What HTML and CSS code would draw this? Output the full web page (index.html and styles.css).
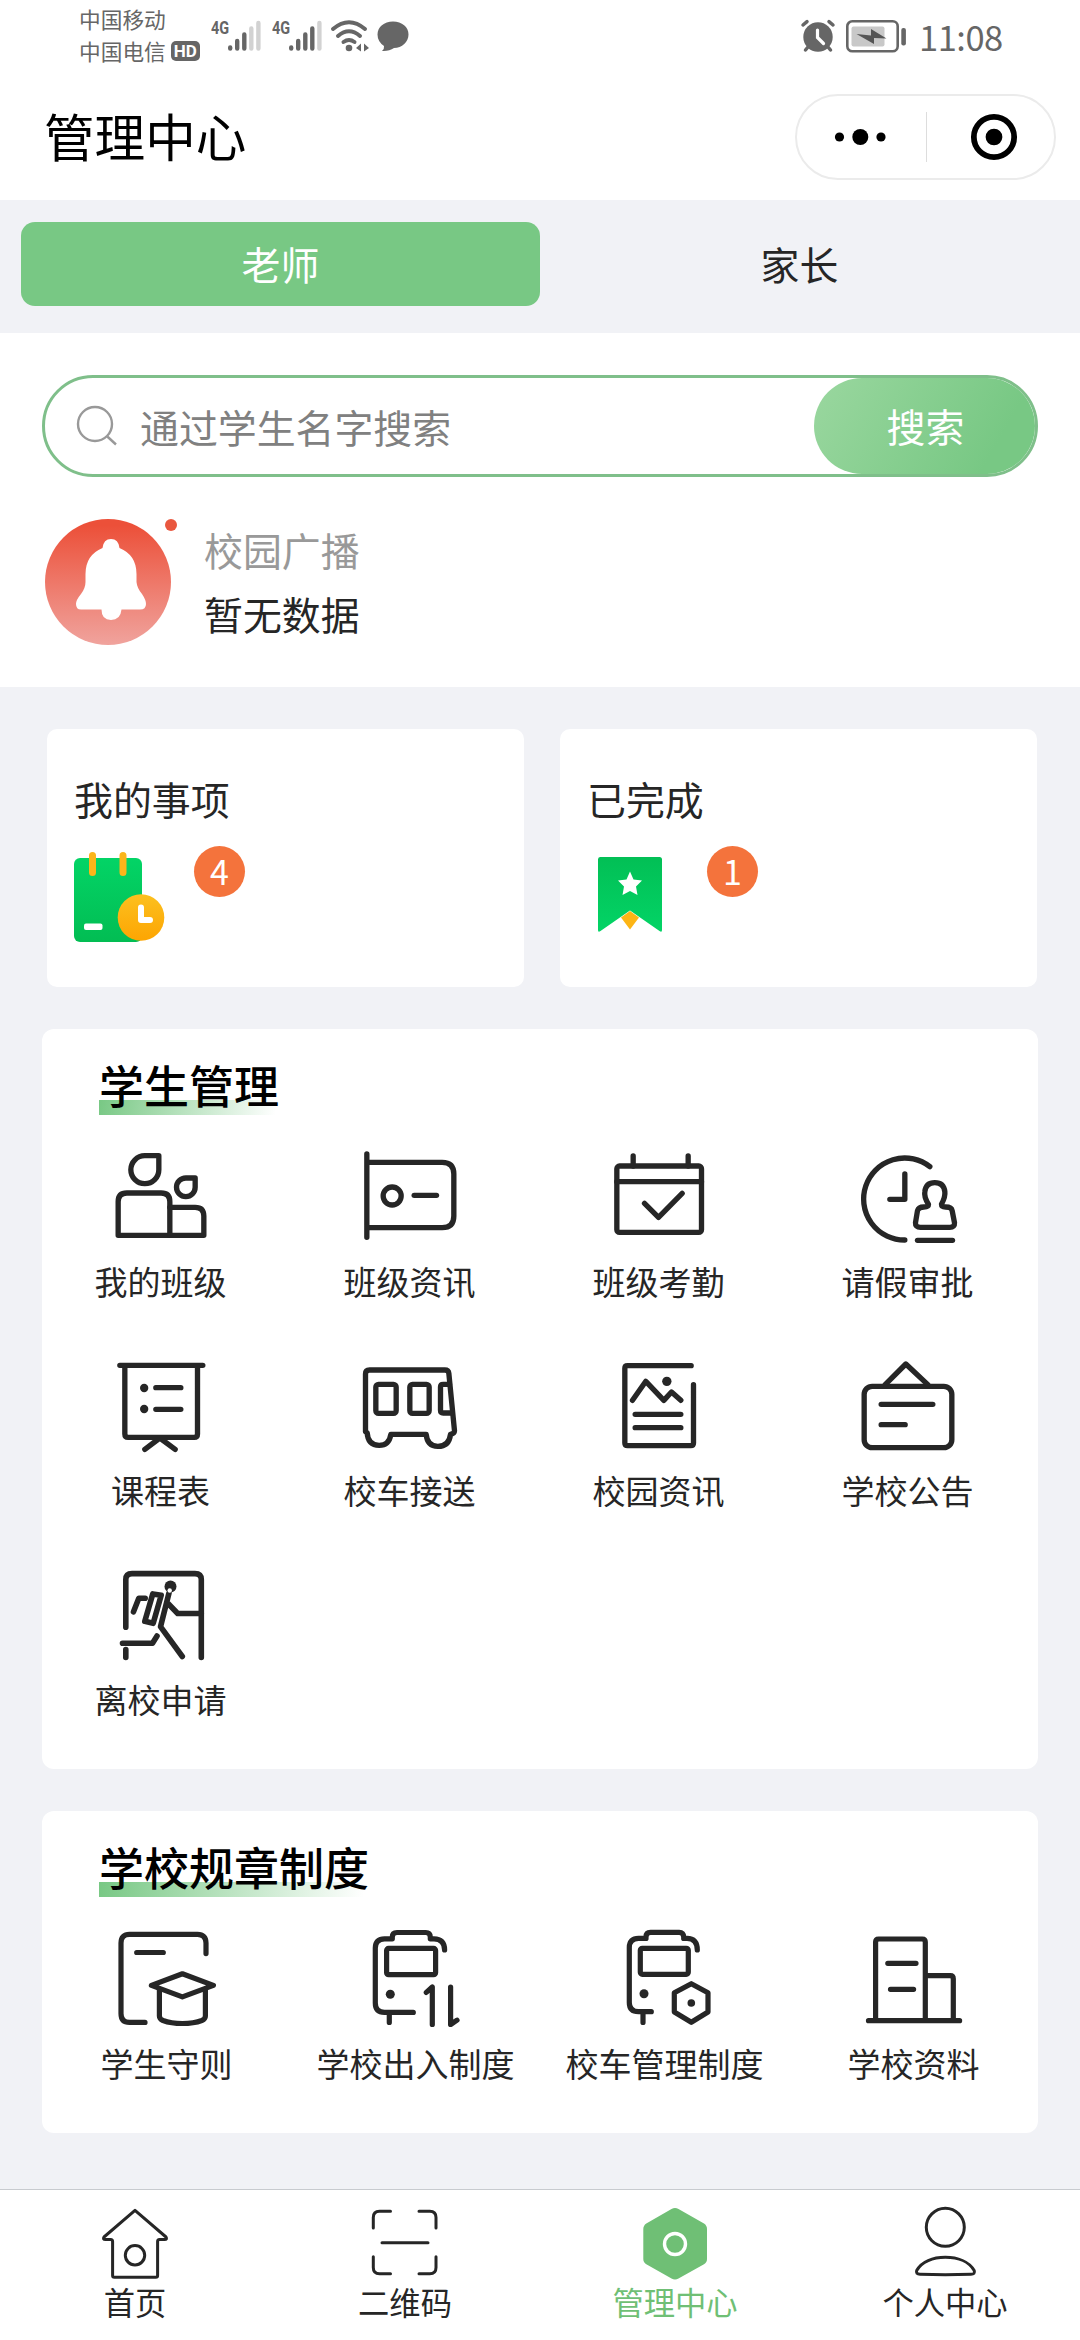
FILE: index.html
```html
<!DOCTYPE html>
<html lang="zh-CN">
<head>
<meta charset="utf-8">
<title>管理中心</title>
<link rel="stylesheet" href="styles.css">
</head>
<body>
<div class="app">
  <div class="status">
    <div class="carriers">
      <div class="carrier">中国移动</div>
      <div class="carrier">中国电信<span class="hd">HD</span></div>
    </div>
    <div class="signal">
      <span class="net">4G</span>
      <svg class="bars" viewBox="0 0 34 32"><g stroke-width="4.4" stroke-linecap="round" stroke="#666"><path d="M2.2 27.5V28.5M9.2 21V28.5M16.3 14.5V28.5"/><path stroke="#d2d2d2" d="M23.3 8.5V28.5M30.4 3V28.5"/></g></svg>
    </div>
    <div class="signal second">
      <span class="net">4G</span>
      <svg class="bars" viewBox="0 0 34 32"><g stroke-width="4.4" stroke-linecap="round" stroke="#666"><path d="M2.2 27.5V28.5M9.2 21V28.5M16.3 14.5V28.5M23.3 8.5V28.5"/><path stroke="#d2d2d2" d="M30.4 3V28.5"/></g></svg>
    </div>
    <svg class="wifi" viewBox="0 0 38 32"><g fill="none" stroke="#666" stroke-width="4" stroke-linecap="round"><path d="M2 9Q18 -4.500 34 9"/><path d="M7 16Q18 6.500 29 16"/><path d="M12.500 22Q18 18 23.500 22"/></g><circle cx="18" cy="28" r="3.300" fill="#666"/><path d="M25 28l5-4.500v8zM38 28l-5-4.500v8z" fill="#666"/></svg>
    <svg class="chat" viewBox="0 0 32 31"><path d="M16 .5C25 .5 31.500 6 31.500 13.500S25 27 17 27Q12 30.500 5 30Q7.500 28 7 25Q.5 20.500 .5 13.500C.5 6 7 .5 16 .5Z" fill="#666"/></svg>
    <div class="status-right">
      <svg class="alarm" viewBox="0 0 34 32"><circle cx="17" cy="17" r="14.700" fill="#666"/><path d="M2 5L6 1.700M32 5L28 1.700M7 27L4.500 30M27 27L29.500 30" stroke="#666" stroke-width="3.500" stroke-linecap="round"/><path d="M16.500 10V17.500L22.500 23.500" fill="none" stroke="#fff" stroke-width="3.200" stroke-linecap="round"/></svg>
      <svg class="battery" viewBox="0 0 61 33"><rect x="1.300" y="1.300" width="50.400" height="30" rx="5" fill="none" stroke="#666" stroke-width="2.600"/><rect x="5.500" y="6.500" width="33" height="20" rx="2" fill="#c8c8c8"/><path d="M10.500 14L25 15.500V9L40.500 18.500L28 18V24Z" fill="#555"/><rect x="55.300" y="8" width="4.600" height="17.500" rx="2" fill="#666"/></svg>
      <span class="time">11:08</span>
    </div>
  </div>

  <header class="header">
    <h1 class="page-title">管理中心</h1>
    <div class="capsule">
      <svg class="dots" viewBox="0 0 42 18"><circle cx="4.500" cy="9" r="4.600"/><circle cx="25.300" cy="9" r="8"/><circle cx="46" cy="9" r="4.600"/></svg>
      <span class="capsule-line"></span>
      <svg class="target" viewBox="0 0 50 50"><circle cx="25" cy="25" r="21" fill="none" stroke="#000" stroke-width="6"/><circle cx="25" cy="25" r="8.700"/></svg>
    </div>
  </header>

  <div class="roles">
    <div class="role active">老师</div>
    <div class="role">家长</div>
  </div>

  <div class="top">
    <div class="search">
      <svg class="search-icon" viewBox="0 0 42 42"><g fill="none" stroke="#999" stroke-width="2.400"><circle cx="19" cy="19" r="17"/><path d="M31.300 31.500L40 39.500"/></g></svg>
      <span class="placeholder">通过学生名字搜索</span>
      <span class="search-btn">搜索</span>
    </div>
    <div class="notice">
      <div class="bell-wrap">
        <svg class="bell" viewBox="0 0 126 126">
          <defs><linearGradient id="red" x1="0" y1="0" x2="0" y2="1"><stop offset="0.050" stop-color="#ec5039"/><stop offset="1" stop-color="#f0a39d"/></linearGradient></defs>
          <circle cx="63" cy="63" r="63" fill="url(#red)"/>
          <path fill="#fff" d="M57.500 29Q58.500 20 66 20T74.500 29Q91.500 36 91.500 55V63Q92 69 97 75Q101 81 101 85Q101 90.500 95 90.500H76.500Q75.500 101 66 101T56.500 90.500H36Q31 90.500 31 85Q31 81 36 75Q40.500 69 40.500 63V55Q40.500 36 57.500 29Z"/>
        </svg>
        <i class="red-dot"></i>
      </div>
      <div class="notice-text">
        <div class="notice-title">校园广播</div>
        <div class="notice-body">暂无数据</div>
      </div>
    </div>
  </div>

  <div class="cards">
    <div class="card">
      <div class="card-title">我的事项</div>
      <div class="card-row">
        <svg class="card-icon" viewBox="0 0 92 92">
          <defs>
            <linearGradient id="green" x1="0" y1="0" x2="0" y2="1"><stop offset="0" stop-color="#03d466"/><stop offset="1" stop-color="#02bd53"/></linearGradient>
            <linearGradient id="gold" x1="0" y1="0" x2="0" y2="1"><stop offset="0" stop-color="#fcc01f"/><stop offset="1" stop-color="#fda502"/></linearGradient>
          </defs>
          <rect x="0" y="6" width="68" height="84" rx="6" fill="url(#green)"/>
          <path d="M18.500 3.500V20.500M49 3.500V20.500" stroke="#fbb51a" stroke-width="7" stroke-linecap="round"/>
          <rect x="10" y="71.500" width="18.500" height="6.500" rx="2" fill="#fff"/>
          <circle cx="67" cy="65.500" r="23.300" fill="url(#gold)"/>
          <path d="M67 55.500V68H76" fill="none" stroke="#fff" stroke-width="6" stroke-linecap="round" stroke-linejoin="round"/>
        </svg>
        <span class="badge">4</span>
      </div>
    </div>
    <div class="card">
      <div class="card-title">已完成</div>
      <div class="card-row">
        <svg class="card-icon" viewBox="0 0 92 92">
          <defs><linearGradient id="ribbon" x1="0" y1="0" x2="0" y2="1"><stop offset="0" stop-color="#02bf55"/><stop offset="1" stop-color="#03d466"/></linearGradient></defs>
          <path d="M13 5H72.500Q75 5 75 7.500V78Q75 81 72.500 79L43 58.500L13.500 79Q11 81 11 78V7.500Q11 5 13 5Z" fill="url(#ribbon)"/>
          <path d="M43 59L52 65.500L43 77.500L34 65.500Z" fill="#fdb515"/>
          <path d="M43 19.500L46.500 27.500L55 28.500L49 34.500L50.500 43L43 39L35.500 43L37 34.500L31 28.500L39.500 27.500Z" fill="#fff"/>
        </svg>
        <span class="badge">1</span>
      </div>
    </div>
  </div>

  <section class="panel">
    <h2 class="panel-title">学生管理</h2>
    <div class="grid students">
      <div class="item">
        <svg class="icon" viewBox="211.500 411 300 300"><g class="line wide"><path d="M313 437H355V479A42 42 0 1 1 313 437Z"/><path d="M436 504H464V532A28 28 0 1 1 436 504Z"/><path d="M233 676V575Q233 549 259 549H362Q388 549 388 575V676Z"/><path d="M388 592H464Q490 592 490 618V676H388"/></g></svg>
        <span class="label">我的班级</span>
      </div>
      <div class="item">
        <svg class="icon" viewBox="958.500 411 300 300"><g class="line wide"><path d="M979 432V682M979 457H1205Q1240 457 1240 492V618Q1240 653 1205 653H979"/><circle cx="1055" cy="558" r="27"/><path d="M1121 556H1188"/></g></svg>
        <span class="label">班级资讯</span>
      </div>
      <div class="item">
        <svg class="icon" viewBox="205.500 411 300 300"><g class="line wide"><rect x="229" y="468" width="254" height="199" rx="8"/><path d="M229 515H483M278 438V468M443 438V468M312 580L354 622L425 550"/></g></svg>
        <span class="label">班级考勤</span>
      </div>
      <div class="item">
        <svg class="icon" viewBox="952.500 411 300 300"><g class="line wide"><path d="M1168 470A123 123 0 1 0 1093 690M1093 492V568H1048"/><path d="M1164 583Q1150 560 1153 545Q1156 518 1183 518T1213 545Q1215 560 1203 583Q1203 591 1215 591Q1233 591 1235 602L1242 638Q1243 652 1228 652H1140Q1124 652 1125 638L1131 602Q1134 591 1150 591Q1164 591 1164 583Z"/><path d="M1131 691H1236"/></g></svg>
        <span class="label">请假审批</span>
      </div>
      <div class="item">
        <svg class="icon" viewBox="211.500 1038 300 300"><g class="line wide"><path d="M238 1066H487M253 1066V1272Q253 1282 263 1282H461Q471 1282 471 1272V1066M346 1133H421M346 1198H421M313 1318L358 1284L404 1318"/></g><circle cx="311" cy="1134" r="12.500" class="solid"/><circle cx="311" cy="1197" r="12.500" class="solid"/></svg>
        <span class="label">课程表</span>
      </div>
      <div class="item">
        <svg class="icon" viewBox="958.500 1038 300 300"><g class="line wide"><path d="M975 1265V1092Q975 1080 987 1080H1213Q1224 1080 1225 1090L1242 1262Q1242 1270 1230 1273Q1226 1309 1192 1309Q1160 1309 1157 1273H1051Q1046 1306 1016 1306Q982 1306 980 1268Z"/><rect x="1006" y="1123" width="61" height="87" rx="8"/><rect x="1108" y="1123" width="58" height="87" rx="8"/><path d="M1227 1123H1208Q1200 1123 1200 1131V1201Q1200 1209 1208 1209H1234"/></g></svg>
        <span class="label">校车接送</span>
      </div>
      <div class="item">
        <svg class="icon" viewBox="205.500 1038 300 300"><g class="line wide"><path d="M452 1067H261Q253 1067 253 1075V1299Q253 1307 261 1307H451Q459 1307 459 1299V1124M276 1171L316 1114L370 1171L393 1146L421 1171M284 1213H421M284 1253H421"/></g><circle cx="379" cy="1114" r="14" class="solid"/></svg>
        <span class="label">校园资讯</span>
      </div>
      <div class="item">
        <svg class="icon" viewBox="952.500 1038 300 300"><g class="line wide"><rect x="971" y="1129" width="263" height="184" rx="24"/><path d="M1034 1124L1096 1062L1162 1124M1022 1183H1177M1022 1244H1094"/></g></svg>
        <span class="label">学校公告</span>
      </div>
      <div class="item">
        <svg class="icon" viewBox="0 0 100 100"><g class="line runner"><path d="M14.800 62.300V14.600Q14.800 8.600 21 8.600H84Q90.300 8.600 90.300 14.600V92.500M14.800 84.500V92.500"/><path d="M11.500 78.200H41.500L46 71"/><path d="M58 28L49.500 61.700L71.300 91.500M56.800 38.300L66.700 48.500H90.300"/><path d="M41.800 28.900L50.200 30.300L42.200 58.300L33.800 56.300Z"/><path d="M34.200 33.300H27.800L22.500 46.800"/></g><circle cx="59.500" cy="21.500" r="6" class="solid"/><circle cx="58.700" cy="25.500" r="2.200" fill="#fff"/></svg>
        <span class="label">离校申请</span>
      </div>
    </div>
  </section>

  <section class="panel">
    <h2 class="panel-title">学校规章制度</h2>
    <div class="grid">
      <div class="item">
        <svg class="icon" viewBox="0 0 100 100"><g class="line"><path d="M89 24.600V14Q89 5.400 80.500 5.400H12.500Q4 5.400 4 14V84.500Q4 93.400 12.500 93.400H28M19.700 23.500H46.300"/><path d="M34.400 56.400L65.400 44.800L96.400 56.400L65.400 67.900Z"/><path d="M42.400 60.500V87Q42.400 90 46 91.500Q54 94.500 65.400 94.500T84.800 91.500Q88.400 90 88.400 87V60.500"/></g></svg>
        <span class="label">学生守则</span>
      </div>
      <div class="item">
        <svg class="icon" viewBox="0 0 100 100"><g class="line"><path d="M78.600 20.900Q78.600 9.800 68 9.800H64.300V8Q64.300 3.500 59.800 3.500H31Q26.300 3.500 26.300 8V9.800H18.500Q9.300 9.800 9.300 19V74Q9.300 83.400 18.500 83.400H47.300M23.300 83.400V93.500"/><rect x="20.600" y="19.400" width="49" height="26.300" rx="2"/><path d="M60.300 63.400L66.300 58V95.500M84.600 58V95.500L91 91.200"/></g><circle cx="24.300" cy="65.300" r="4.500" class="solid"/></svg>
        <span class="label">学校出入制度</span>
      </div>
      <div class="item">
        <svg class="icon" viewBox="0 0 100 100"><g class="line"><path d="M82.300 20.900Q82.300 9.400 72 9.400H68.700V8Q68.700 3.400 64.200 3.400H35.500Q31 3.400 31 8V9.400H23.500Q14.300 9.400 14.300 18.500V73.500Q14.300 82.700 23.500 82.700H36.300M28 82.700V93.500"/><rect x="25.300" y="19.300" width="48" height="26" rx="2"/><path d="M76.300 54.700L93 63.700V83L76.300 93.300L59.300 83V63.700Z"/></g><circle cx="29" cy="64.700" r="4.500" class="solid"/><circle cx="76.300" cy="74" r="3.800" class="solid"/></svg>
        <span class="label">校车管理制度</span>
      </div>
      <div class="item">
        <svg class="icon" viewBox="0 0 100 100"><g class="line"><path d="M4.500 91.700H95.600M11.600 91.700V13Q11.600 10 14.600 10H58.300Q61.300 10 61.300 13V91.700M61.300 46.700H86.300Q89.300 46.700 89.300 49.700V91.700M23.800 34.300H52M26.500 60.300H49.600"/></g></svg>
        <span class="label">学校资料</span>
      </div>
    </div>
  </section>

  <nav class="tabbar">
    <div class="tab">
      <svg class="tab-icon" viewBox="0 0 80 80"><g class="line thin"><path d="M40 6.300L71 33Q72.500 35.500 69.500 35.500H64.500Q62.600 35.500 62.600 37.500V71.500Q62.600 73.300 60.800 73.300H19.400Q17.600 73.300 17.600 71.500V37.500Q17.600 35.500 15.600 35.500H10.500Q7.500 35.500 9 33Z"/><circle cx="40" cy="51.300" r="9.700"/></g></svg>
      <span class="tab-label">首页</span>
    </div>
    <div class="tab">
      <svg class="tab-icon" viewBox="0 0 80 80"><g class="line thin"><path d="M8.300 24V13.500Q8.300 7.300 14.500 7.300H25.500M54 7.300H64.800Q71 7.300 71 13.500V24M71 52.700V63.500Q71 69.700 64.800 69.700H54M25.500 69.700H14.500Q8.300 69.700 8.300 63.500V52.700M17 38.700H63"/></g></svg>
      <span class="tab-label">二维码</span>
    </div>
    <div class="tab current">
      <svg class="tab-icon" viewBox="0 0 80 80"><path d="M36.500 5Q40 3 43.500 5L69 19.500Q72 21.500 72 25V55Q72 58.500 69 60.300L43.500 74.500Q40 76.500 36.500 74.500L11.300 60.300Q8.300 58.500 8.300 55V25Q8.300 21.500 11.300 19.500Z" fill="#6fbf75"/><circle cx="40" cy="40" r="10.500" fill="none" stroke="#fff" stroke-width="3.400"/></svg>
      <span class="tab-label">管理中心</span>
    </div>
    <div class="tab">
      <svg class="tab-icon" viewBox="0 0 80 80"><g class="line thin"><circle cx="40.300" cy="23.300" r="19"/><path d="M15 70.300Q10.500 70.300 11.700 66.500C16.500 57.500 28 53.300 40.300 53.300S64 57.500 69.200 66.500Q70.400 70.300 66 70.300Q40 71 15 70.300Z"/></g></svg>
      <span class="tab-label">个人中心</span>
    </div>
  </nav>
</div>
</body>
</html>
```

FILE: styles.css
```css
* { box-sizing: border-box; }

body {
  margin: 0;
  background: #f1f2f6;
  font-family: "Noto Sans CJK SC", "Noto Sans", sans-serif;
  color: #262626;
}

svg { display: block; flex: none; overflow: visible; }
h1, h2 { margin: 0; font-weight: 400; }

.app {
  width: 1080px;
  height: 2340px;
  display: flex;
  flex-direction: column;
}

/* system status bar */
.status {
  display: flex;
  align-items: flex-start;
  height: 75px;
  padding: 3px 78px 0 79px;
  background: #fff;
  color: #666;
}
.carriers { width: 132px; }
.carrier {
  display: flex;
  align-items: center;
  gap: 5px;
  height: 31.5px;
  font-size: 21.7px;
  line-height: 31.5px;
  white-space: nowrap;
}
.hd {
  width: 29px;
  height: 20px;
  margin-top: 2px;
  border-radius: 5px;
  background: #666;
  color: #fff;
  font: 700 17px/20px Roboto, sans-serif;
  text-align: center;
}
.signal { display: flex; width: 61px; padding-top: 17px; }
.signal.second { width: 59px; }
.net {
  width: 17px;
  height: 16px;
  font: 700 19px/16px Roboto, sans-serif;
  transform: scaleX(0.76);
  transform-origin: left;
}
.bars { width: 34px; height: 32px; }
.wifi { width: 38px; height: 32px; margin-top: 17px; }
.chat { width: 32px; height: 31px; margin: 18px 0 0 8px; }
.status-right { display: flex; margin: 17px 0 0 auto; }
.alarm { width: 34px; height: 32px; }
.battery { width: 61px; height: 33px; margin-left: 11px; }
.time { width: 83px; margin-left: 12px; font-size: 34.5px; line-height: 32px; letter-spacing: -0.5px; }

/* title bar */
.header {
  display: flex;
  justify-content: space-between;
  height: 125px;
  padding: 19px 24px 0 44px;
  background: #fff;
}
.page-title {
  color: #000;
  font-size: 50.6px;
  line-height: 82px;
}
.capsule {
  display: flex;
  align-items: center;
  width: 261px;
  height: 86px;
  padding-left: 38px;
  border: 2px solid #ebebeb;
  border-radius: 43px;
}
.dots { width: 42px; height: 18px; }
.capsule-line { width: 1px; height: 50px; margin: 0 43px 0 49px; background: #ddd; }
.target { width: 48px; height: 48px; }

/* role switch */
.roles {
  display: flex;
  height: 133px;
  padding: 22px 21px 27px;
}
.role {
  flex: 1;
  border-radius: 14px;
  font-size: 38.9px;
  line-height: 82px;
  text-align: center;
}
.role.active { background: #78c884; color: #fff; }

/* search and broadcast */
.top { height: 354px; padding: 42px 42px 0; background: #fff; }
.search {
  display: flex;
  align-items: center;
  height: 102px;
  padding-left: 31px;
  border: 3px solid #7fbf8a;
  border-radius: 51px;
}
.search-icon { width: 42px; height: 42px; }
.placeholder {
  flex: 1;
  padding-left: 22px;
  color: #808080;
  font-size: 38.9px;
  line-height: 94px;
}
.search-btn {
  width: 221px;
  height: 96px;
  padding-left: 2px;
  border-radius: 48px;
  background: linear-gradient(120deg, #9ad79f, #78c884 80%);
  color: #fff;
  font-size: 38.9px;
  line-height: 94px;
  text-align: center;
}
.notice { display: flex; padding: 42px 0 0 3px; }
.bell-wrap { position: relative; width: 126px; height: 126px; }
.bell { width: 126px; height: 126px; }
.red-dot {
  position: absolute;
  top: 0;
  right: -6px;
  width: 12px;
  height: 12px;
  border-radius: 50%;
  background: #e9573f;
}
.notice-text { padding-left: 33px; font-size: 38.9px; line-height: 64px; }
.notice-title { margin-top: -2px; color: #999; }

/* task cards */
.cards { display: flex; gap: 36px; padding: 42px 43px 42px 47px; }
.card {
  flex: 1;
  height: 258px;
  padding: 40px 27px 0;
  border-radius: 10px;
  background: #fff;
}
.card-title { font-size: 38.9px; line-height: 58px; }
.card-row { display: flex; padding-top: 19px; }
.card-icon { width: 92px; height: 92px; margin-top: 6px; }
.badge {
  width: 51px;
  height: 51px;
  margin-left: 28px;
  border-radius: 50%;
  background: #f4733c;
  color: #fff;
  font-size: 34px;
  line-height: 50px;
  text-align: center;
}

/* feature panels */
.panel {
  margin: 0 42px 42px;
  padding: 24px 0 45px;
  border-radius: 12px;
  background: #fff;
}
.panel-title {
  width: max-content;
  height: 62px;
  margin-left: 57px;
  background: linear-gradient(100deg, #78c884, rgba(120, 200, 132, 0) 98%) bottom / 100% 15px no-repeat;
  color: #000;
  font-size: 45px;
  font-weight: 500;
  line-height: 64px;
}
.grid {
  display: grid;
  grid-template-columns: repeat(4, 249px);
  row-gap: 50px;
  margin-top: 32px;
}
.grid.students { margin-left: -6px; }
.item { display: flex; flex-direction: column; align-items: center; }
.icon { width: 100px; height: 100px; }
.label { margin-top: 9px; font-size: 33px; line-height: 50px; white-space: nowrap; }

.line {
  fill: none;
  stroke: #262626;
  stroke-width: 5.2px;
  stroke-linecap: round;
  stroke-linejoin: round;
}
.line.wide { stroke-width: 16px; }
.line.runner { stroke-width: 5.6px; }
.line.thin { stroke-width: 3px; }
.solid { fill: #262626; }

/* bottom navigation */
.tabbar {
  display: flex;
  height: 151px;
  margin-top: auto;
  border-top: 1px solid #c8cbcf;
  background: #fff;
}
.tab { flex: 1; display: flex; flex-direction: column; align-items: center; padding-top: 14px; }
.tab-icon { width: 80px; height: 80px; }
.tab-label { font-size: 31.3px; line-height: 36px; }
.current { color: #6fbf75; }
```
